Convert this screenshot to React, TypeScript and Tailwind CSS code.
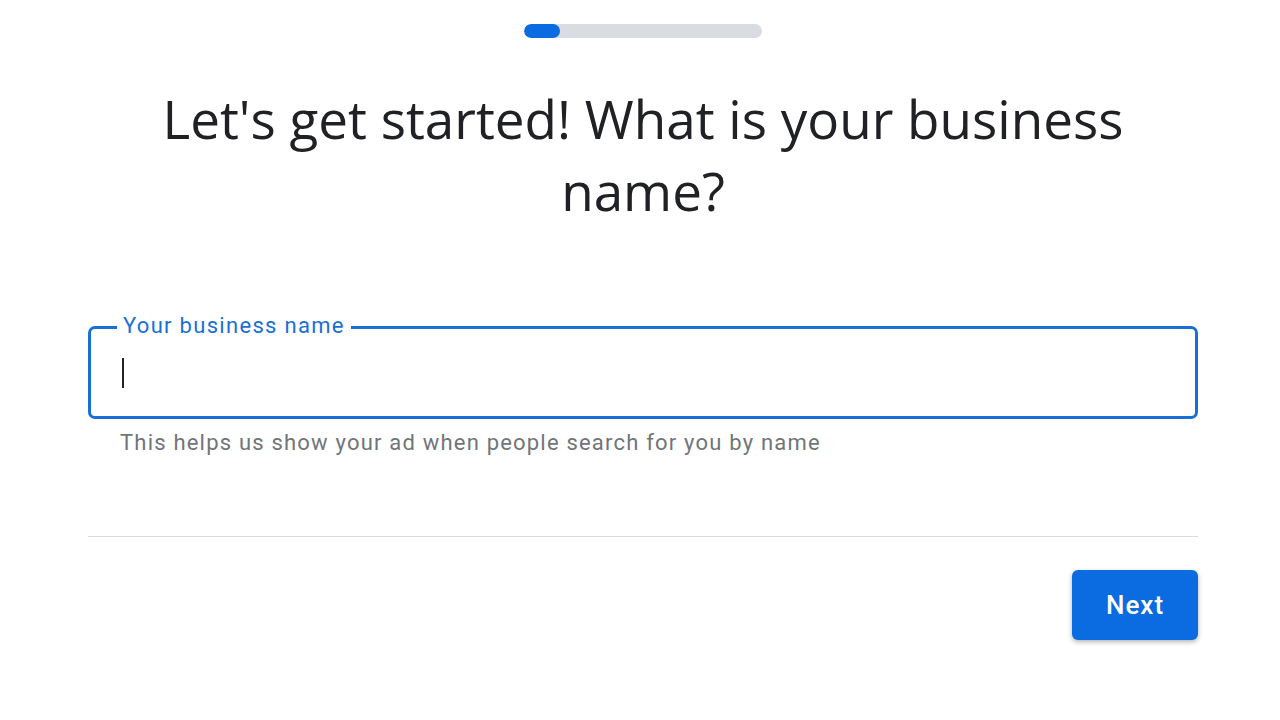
export default function App() {
  return (
    <div className="min-h-[720px] w-full bg-white">
      <div className="ml-[88px] flex w-[1110px] flex-col">
        {/* step progress */}
        <div className="mt-[24px] flex justify-center">
          <div className="h-[14px] w-[238px] overflow-hidden rounded-full bg-[#d9dce0]">
            <div className="h-full w-[36px] rounded-full bg-[#0b6be0]" />
          </div>
        </div>

        <h1
          className="mt-[45px] px-[60px] text-center text-[53px] leading-[72px] text-[#202124]"
          style={{ fontFamily: '"Open Sans", Arial, sans-serif' }}
        >
          Let's get started! What is your business name?
        </h1>

        <div
          className="mt-[99px]"
          style={{ fontFamily: 'Roboto, Arial, sans-serif' }}
        >
          <div className="relative h-[93px] rounded-[7px] border-[3px] border-[#1a6fd6]">
            <span className="absolute -top-[17px] left-[26px] bg-white px-[6px] text-[22px] leading-[28px] tracking-[1.3px] text-[#1a6fd6]">
              Your business name
            </span>
            <div className="ml-[31px] mt-[29px] h-[30px] w-[2px] bg-[#202124]" />
          </div>
          <p className="mt-[10px] pl-[32px] text-[22px] leading-[28px] tracking-[1.2px] text-[#70757a]">
            This helps us show your ad when people search for you by name
          </p>
        </div>

        <div className="mt-[79px] h-px bg-[#dadce0]" />

        <div className="mt-[33px] flex justify-end">
          <button
            className="h-[70px] w-[126px] rounded-[6px] bg-[#0b6be0] text-[26px] font-medium tracking-[1px] text-white shadow-[0_2px_5px_rgba(0,0,0,0.3)]"
            style={{ fontFamily: 'Roboto, Arial, sans-serif' }}
          >
            Next
          </button>
        </div>
      </div>
    </div>
  );
}
